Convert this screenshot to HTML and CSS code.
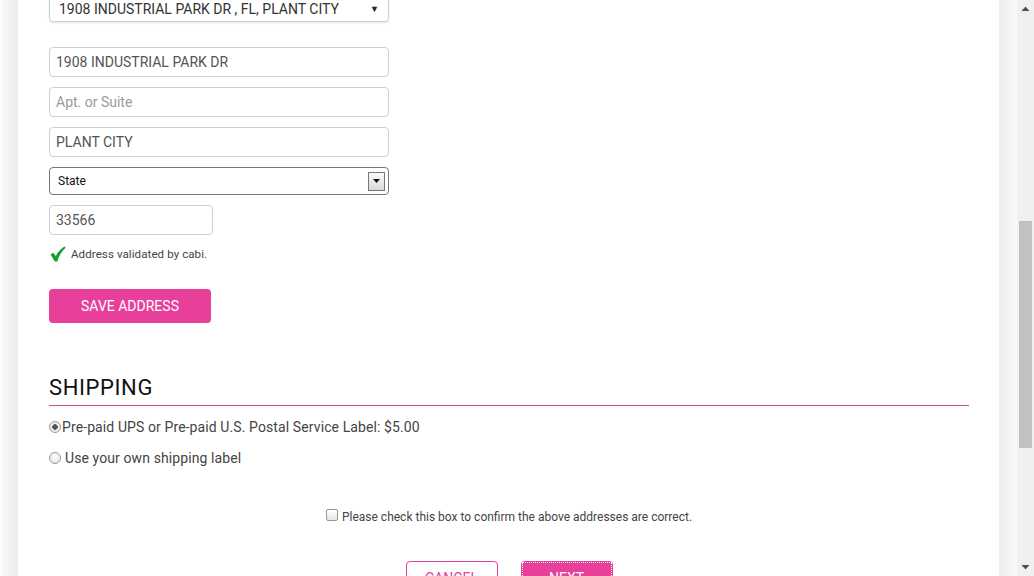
FILE: index.html
```html
<!DOCTYPE html>
<html>
<head>
<meta charset="utf-8">
<link rel="stylesheet" href="styles.css">
</head>
<body>
<div class="window">
  <div class="viewport">
    <div class="panel">
      <div class="select select-top">
        <span>1908 INDUSTRIAL PARK DR , FL, PLANT CITY</span>
        <span class="tri">&#9660;</span>
      </div>
      <div class="field field-first">1908 INDUSTRIAL PARK DR</div>
      <div class="field placeholder">Apt. or Suite</div>
      <div class="field">PLANT CITY</div>
      <div class="select select-state">
        <span>State</span>
        <span class="arrowbox"><svg width="9" height="5" viewBox="0 0 9 5"><path d="M1 0h7L4.5 4z" fill="#111"/></svg></span>
      </div>
      <div class="field field-zip">33566</div>
      <div class="validated">
        <svg class="check" width="16" height="16" viewBox="0 0 16 16"><path d="M0.6 8.6l2.6-1.9 2.6 3.4C8 5.8 11 2.6 14.6 0.4L15.6 1.8C12.2 4.8 9.4 8.8 7.2 15.4H4.8z" fill="#16a02e"/></svg>
        <span>Address validated by cabi.</span>
      </div>
      <div class="save-row"><span class="btn-save">SAVE ADDRESS</span></div>

      <h2 class="heading">SHIPPING</h2>
      <div class="radio-row r1"><span class="radio on"></span><span>Pre-paid UPS or Pre-paid U.S. Postal Service Label: $5.00</span></div>
      <div class="radio-row r2"><span class="radio"></span><span class="gap">Use your own shipping label</span></div>

      <div class="confirm"><span class="checkbox"></span><span>Please check this box to confirm the above addresses are correct.</span></div>

      <div class="actions">
        <span class="btn-cancel">CANCEL</span>
        <span class="btn-next"><span class="focus">NEXT</span></span>
      </div>
    </div>
  </div>
  <div class="scrollbar">
    <div class="sb-up"><svg width="9" height="5" viewBox="0 0 9 5"><path d="M0.5 5L4.5 0.5 8.5 5z" fill="#505050"/></svg></div>
    <div class="sb-track"><div class="sb-thumb"></div></div>
    <div class="sb-down"><svg width="9" height="5" viewBox="0 0 9 5"><path d="M0.5 0L4.5 4.5 8.5 0z" fill="#505050"/></svg></div>
  </div>
</div>
</body>
</html>
```

FILE: styles.css
```css
html, body {
  margin: 0;
  padding: 0;
  height: 576px;
  overflow: hidden;
  background: #fafafa;
  font-family: Roboto, "Liberation Sans", sans-serif;
}
.window {
  display: flex;
  height: 576px;
}
.viewport {
  flex: 1;
  padding: 0 18px;
  overflow: hidden;
  background: linear-gradient(90deg, #ffffff 0, #f6f6f6 4px, #ececec 18px, #ececec calc(100% - 18px), #f6f6f6 calc(100% - 4px), #fafafa 100%);
}
.panel {
  background: #fff;
  height: 620px;
  padding: 0 30px 0 31px;
  display: flex;
  flex-direction: column;
  align-items: flex-start;
}
.select, .field {
  box-sizing: border-box;
  width: 340px;
  border: 1px solid #cfcfcf;
  border-radius: 4px;
  font-size: 14px;
  color: #555;
  display: flex;
  align-items: center;
}
.select-top {
  margin-top: -5px;
  height: 27px;
  padding: 0 9px 0 9px;
  justify-content: space-between;
  color: #333;
  box-shadow: 0 1px 2px rgba(0,0,0,0.12);
}
.select-top .tri {
  font-size: 9px;
  color: #222;
}
.field {
  height: 30px;
  padding: 0 6px;
  margin-top: 10px;
}
.field-first { margin-top: 25px; }
.placeholder { color: #9a9a9a; }
.field-zip { width: 164px; }
.select-state {
  margin-top: 10px;
  height: 28px;
  border-color: #777;
  border-radius: 4px;
  padding: 0 3px 0 8px;
  justify-content: space-between;
  font-size: 12px;
  color: #111;
}
.arrowbox {
  box-sizing: border-box;
  width: 17px;
  height: 19px;
  border: 1px solid #777;
  background: linear-gradient(#fbfbfb, #d8d8d8);
  display: flex;
  align-items: center;
  justify-content: center;
}
.validated {
  margin-top: 11px;
  display: flex;
  align-items: center;
  font-size: 11.5px;
  letter-spacing: 0.1px;
  color: #444;
  height: 16px;
}
.check { margin-left: 1px; margin-right: 5px; }
.save-row { margin-top: 27px; }
.btn-save {
  display: flex;
  align-items: center;
  justify-content: center;
  width: 162px;
  height: 34px;
  border-radius: 4px;
  background: #e8409a;
  color: #fff;
  font-size: 14px;
}
.heading {
  margin: 52px 0 0 0;
  font-weight: 400;
  font-size: 22px;
  line-height: 26px;
  color: #111;
  letter-spacing: 0.6px;
  align-self: stretch;
  border-bottom: 1px solid #c65092;
  padding-bottom: 4px;
}
.radio-row {
  display: flex;
  align-items: center;
  font-size: 14px;
  letter-spacing: 0.1px;
  color: #444;
  height: 18px;
}
.r1 { margin-top: 12px; }
.r2 { margin-top: 13px; }
.radio {
  box-sizing: border-box;
  width: 12px;
  height: 12px;
  border-radius: 50%;
  border: 1px solid #9a9a9a;
  background: radial-gradient(circle at 50% 35%, #fff, #e2e2e2);
  margin-right: 1px;
}
.radio.on {
  background: radial-gradient(circle, #555 0, #555 2.5px, #f2f2f2 3px, #dcdcdc 100%);
}
.gap { margin-left: 3px; }
.confirm {
  align-self: stretch;
  display: flex;
  align-items: center;
  justify-content: center;
  margin-top: 42px;
  font-size: 12px;
  color: #444;
  height: 16px;
}
.checkbox {
  box-sizing: border-box;
  width: 12px;
  height: 12px;
  border: 1px solid #999;
  border-radius: 2px;
  background: linear-gradient(#fff, #e5e5e5);
  margin-right: 4px;
  margin-top: -4px;
}
.actions {
  align-self: stretch;
  display: flex;
  justify-content: center;
  gap: 23px;
  margin-top: 36px;
}
.btn-cancel, .btn-next {
  box-sizing: border-box;
  width: 92px;
  height: 34px;
  border-radius: 4px;
  font-size: 14px;
  display: flex;
  align-items: center;
  justify-content: center;
}
.btn-cancel {
  border: 1px solid #e8409a;
  color: #e8409a;
  background: #fff;
}
.btn-next {
  background: #e8409a;
  color: #fff;
  padding: 1px;
}
.focus {
  box-sizing: border-box;
  width: 100%;
  height: 100%;
  border: 1px dotted #fff;
  display: flex;
  align-items: center;
  justify-content: center;
}
.scrollbar {
  width: 17px;
  background: #f0f0f0;
  display: flex;
  flex-direction: column;
}
.sb-up, .sb-down {
  height: 17px;
  display: flex;
  align-items: center;
  justify-content: center;
}
.sb-track {
  flex: 1;
  display: flex;
  flex-direction: column;
  padding-top: 204px;
}
.sb-thumb {
  margin: 0 2px;
  height: 227px;
  background: #c1c1c1;
}
```
